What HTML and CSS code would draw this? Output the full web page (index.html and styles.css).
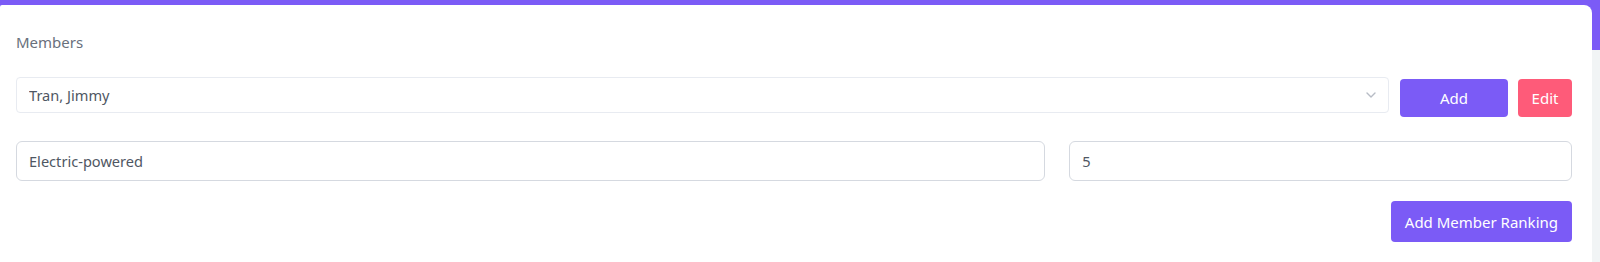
FILE: index.html
```html
<!DOCTYPE html>
<html lang="en">
<head>
    <meta charset="UTF-8">
    <meta name="viewport" content="width=device-width, initial-scale=1.0">
    <title>Members</title>
    <link rel="stylesheet" href="styles.css">
</head>
<body>
    <div class="card">
        <label class="section-label" for="member">Members</label>

        <div class="member-row">
            <div class="select-wrap">
                <select id="member" class="member-select">
                    <option>Tran, Jimmy</option>
                </select>
                <svg class="chevron" width="10" height="6" viewBox="0 0 10 6">
                    <polyline points="1,1 5,5 9,1" fill="none" stroke="#b7bcc5" stroke-width="1.4" stroke-linecap="round" stroke-linejoin="round"/>
                </svg>
            </div>
            <button class="btn btn-primary btn-add">Add</button>
            <button class="btn btn-danger btn-edit">Edit</button>
        </div>

        <div class="ranking-row">
            <input type="text" class="field" value="Electric-powered">
            <input type="number" class="field" value="5">
        </div>

        <div class="actions">
            <button class="btn btn-primary btn-ranking">Add Member Ranking</button>
        </div>
    </div>
</body>
</html>
```

FILE: styles.css
```css
body {
    margin: 0;
    padding: 0;
    font-family: 'Noto Sans', 'Lato', sans-serif;
    background: linear-gradient(#7b5bf6 0, #7b5bf6 50px, #f1f4f5 50px);
    height: 262px;
    overflow: hidden;
}

.card {
    background-color: #ffffff;
    margin: 5px 8px 0 0;
    padding: 27px 20px 0 16px;
    border-radius: 2px 8px 0 0;
    height: 300px;
}

.section-label {
    display: block;
    font-size: 15px;
    line-height: 20px;
    color: #69707c;
    margin-bottom: 25px;
}

.member-row {
    display: flex;
    align-items: flex-start;
}

.select-wrap {
    position: relative;
    flex: 1;
    margin-right: 11px;
}

.member-select {
    width: 100%;
    height: 36px;
    padding: 0 30px 0 12px;
    border: 1px solid #e8ebf1;
    border-radius: 4px;
    background: #ffffff;
    font-family: inherit;
    font-size: 14.6px;
    color: #4f5763;
    appearance: none;
    -webkit-appearance: none;
    outline: none;
}

.chevron {
    position: absolute;
    right: 13px;
    top: 15px;
}

.btn {
    border: none;
    border-radius: 4px;
    color: #ffffff;
    font-family: inherit;
    font-size: 15px;
    cursor: pointer;
    padding: 0;
}

.btn-primary {
    background-color: #7b5bf6;
}

.btn-danger {
    background-color: #fe5b79;
}

.btn-add {
    width: 108px;
    height: 38px;
    margin-top: 2px;
    margin-right: 10px;
}

.btn-edit {
    width: 54px;
    height: 38px;
    margin-top: 2px;
}

.ranking-row {
    display: grid;
    grid-template-columns: calc((100% + 24px) * 2 / 3 - 24px) 1fr;
    gap: 24px;
    margin-top: 24px;
}

.field {
    height: 40px;
    padding: 0 12px;
    border: 1px solid #d5d9e0;
    border-radius: 6px;
    font-family: inherit;
    font-size: 14.6px;
    color: #4f5763;
    outline: none;
    box-sizing: border-box;
    width: 100%;
}

.field::-webkit-inner-spin-button,
.field::-webkit-outer-spin-button {
    -webkit-appearance: none;
    margin: 0;
}

.actions {
    display: flex;
    justify-content: flex-end;
    margin-top: 20px;
}

.btn-ranking {
    height: 41px;
    padding: 0 14px;
}
```
